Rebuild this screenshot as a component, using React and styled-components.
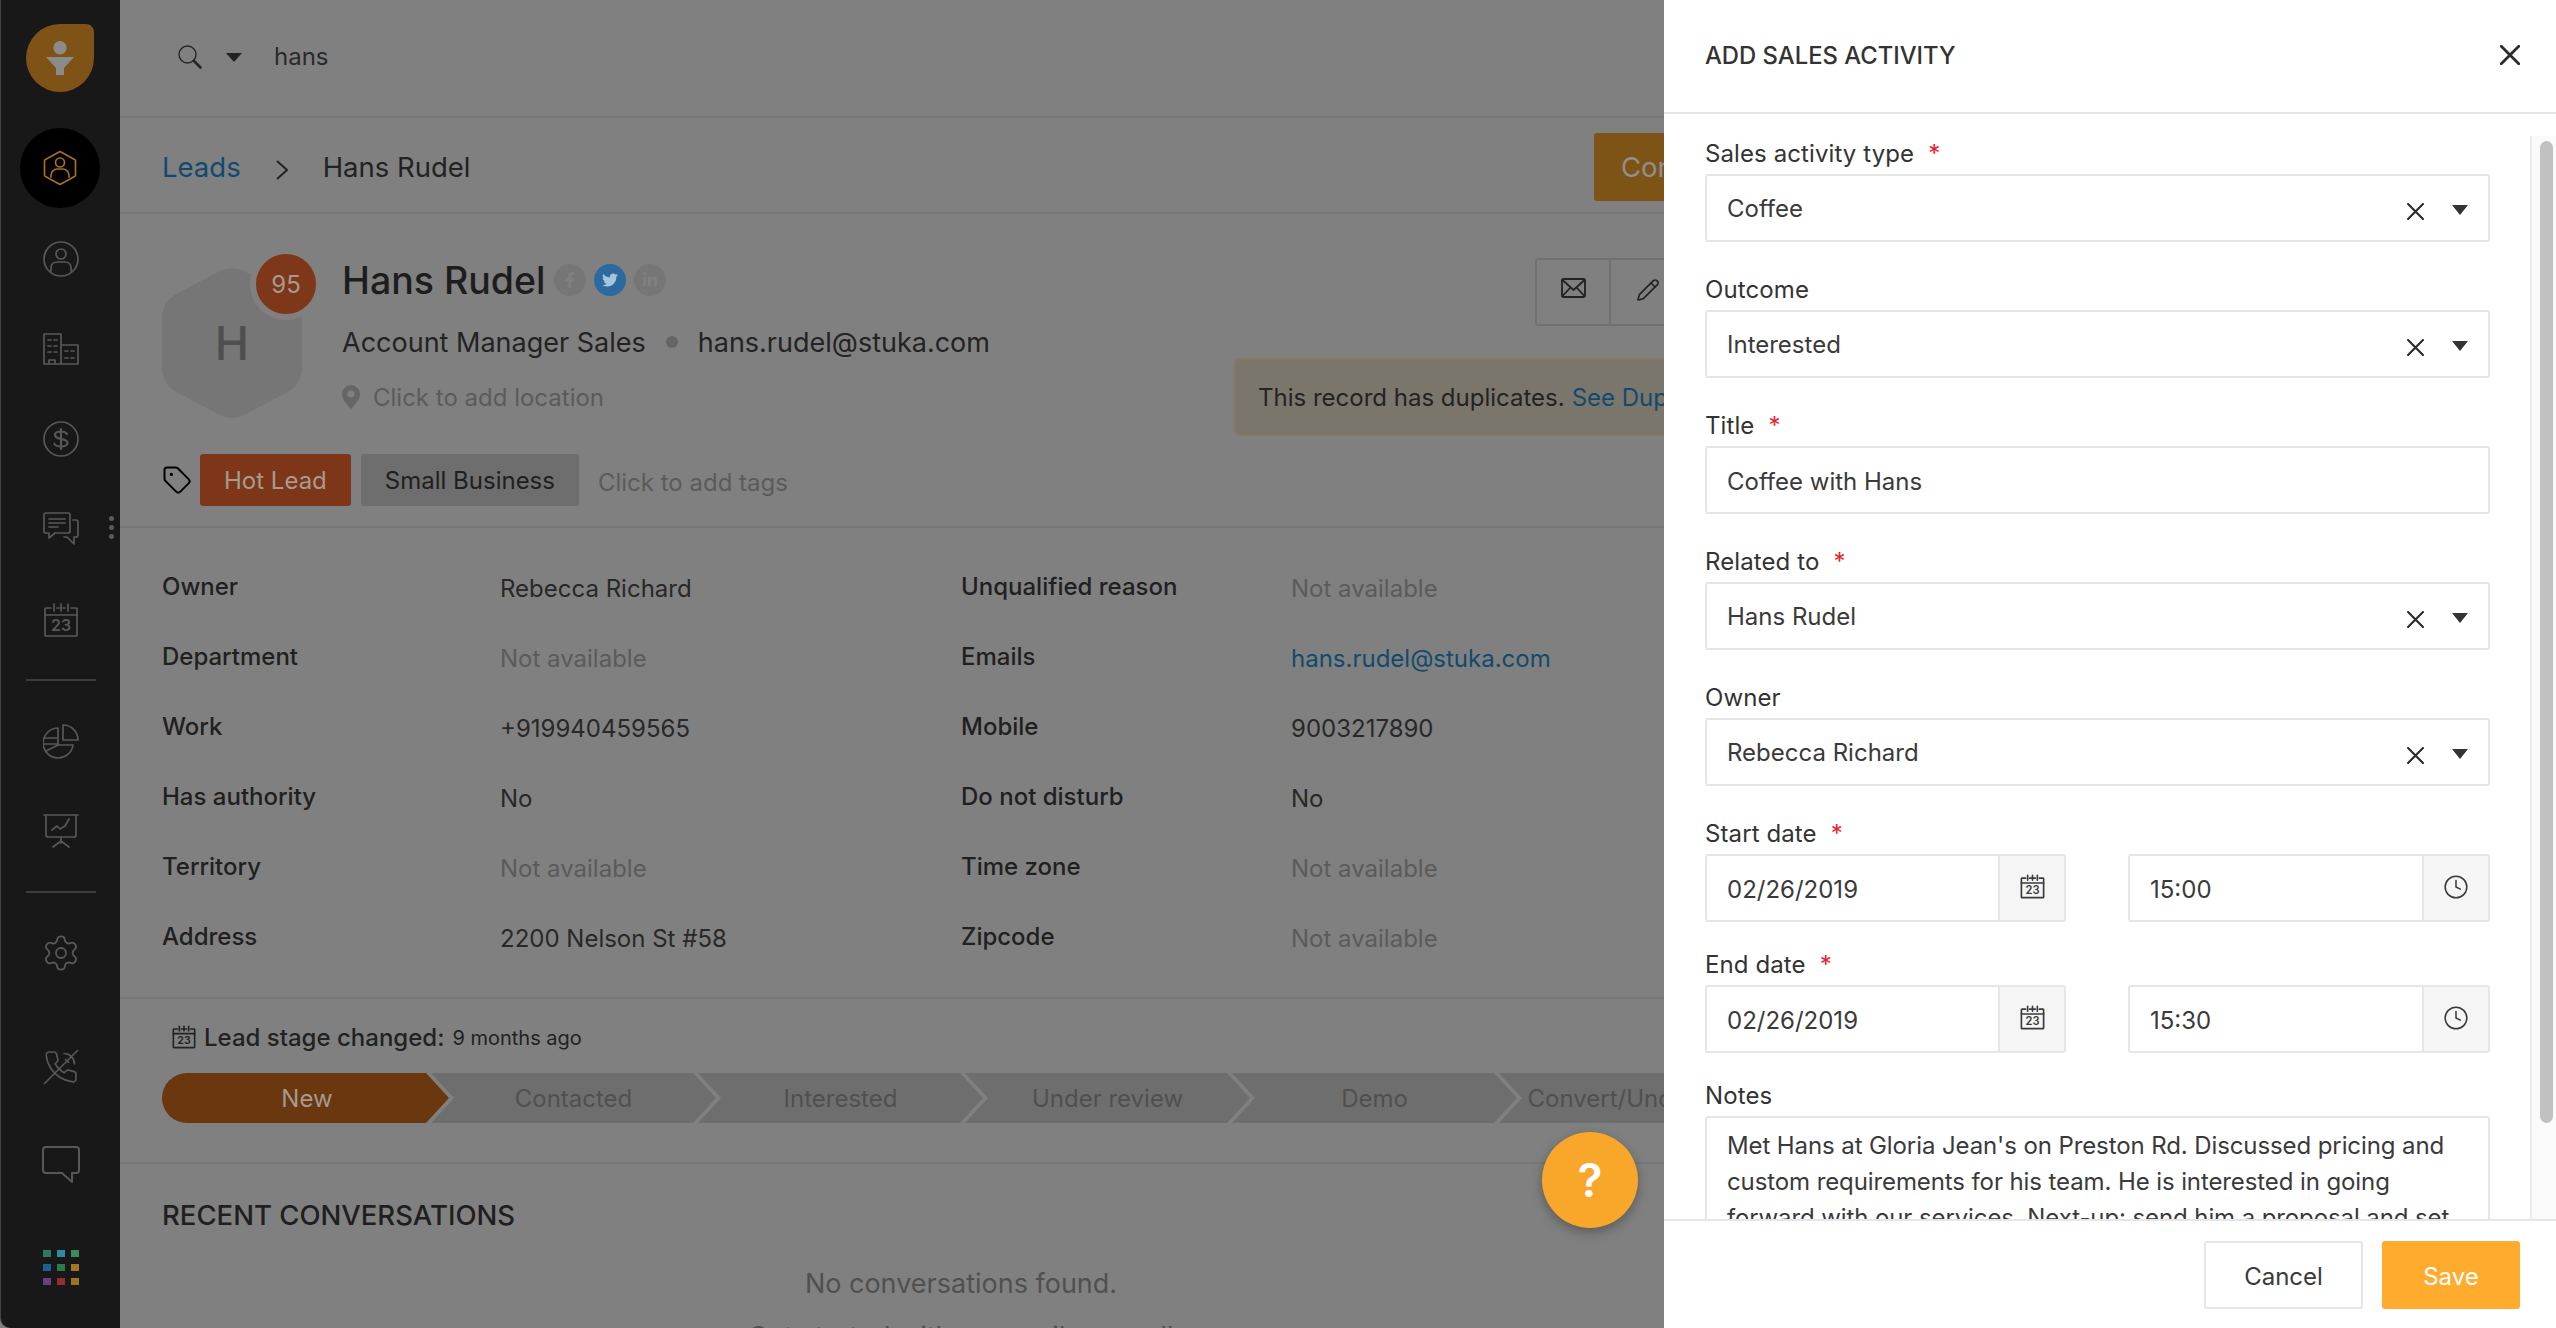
import React from "react";
import styled, { createGlobalStyle } from "styled-components";
import { Settings, Tag, Clock, Pencil } from "lucide-react";
import { FaFacebookF, FaTwitter, FaLinkedinIn } from "react-icons/fa";

const GlobalStyle = createGlobalStyle`
  html, body { margin: 0; padding: 0; height: 100%; background: #808080; }
  body { font-family: Inter, "Noto Sans", sans-serif; overflow: hidden; }
  * { box-sizing: border-box; }
`;

const Shell = styled.div`
  position: relative;
  display: flex;
  width: 2556px;
  height: 1328px;
  overflow: hidden;
  background: #808080;
`;

/* left nav */
const Nav = styled.nav`
  position: relative;
  flex: 0 0 120px;
  display: flex;
  flex-direction: column;
  align-items: center;
  padding-top: 24px;
  background: #181818;
  border-left: 1px solid #444;
  border-bottom-left-radius: 10px;
`;

const Logo = styled.div`
  width: 68px;
  height: 68px;
  margin-right: 1px;
  display: flex;
  align-items: center;
  justify-content: center;
  background: #7f5316;
  border-radius: 50% 8px 50% 50%;
`;

const ActiveItem = styled.div`
  width: 80px;
  height: 80px;
  margin-top: 36px;
  margin-right: 2px;
  border-radius: 50%;
  background: #000;
  display: flex;
  align-items: center;
  justify-content: center;
`;

const NavItem = styled.div`
  height: 36px;
  margin-top: ${({ $top }) => $top}px;
  display: flex;
  align-items: center;
  justify-content: center;
  color: #585858;
`;

const NavRule = styled.div`
  width: 70px;
  height: 2px;
  margin-top: ${({ $top }) => $top}px;
  background: #3d3d3d;
`;

const GridDots = styled.div`
  display: grid;
  grid-template-columns: repeat(3, 8px);
  grid-auto-rows: 7px;
  gap: 7px 6px;
  margin-top: ${({ $top }) => $top}px;
`;

const GridDot = styled.span`
  background: ${({ $color }) => $color};
`;

const MoreDots = styled.div`
  position: absolute;
  left: 108px;
  top: 516px;
  display: flex;
  flex-direction: column;
  gap: 4px;

  span {
    width: 5px;
    height: 5px;
    border-radius: 50%;
    background: #5a5a5a;
  }
`;

/* behind the panel */
const Main = styled.main`
  flex: 0 0 1544px;
  min-width: 0;
  overflow: hidden;
  color: #222;
`;

const SearchBar = styled.div`
  height: 118px;
  padding: 0 0 3px 58px;
  display: flex;
  align-items: center;
  border-bottom: 2px solid #777;
  font-size: 24px;
  color: #2a2a2a;
`;

const Caret = styled.span`
  width: 0;
  height: 0;
  margin: 2px 32px 0 24px;
  border-left: 8px solid transparent;
  border-right: 8px solid transparent;
  border-top: 9px solid #222;
`;

const Crumbs = styled.div`
  height: 96px;
  padding: 3px 0 0 42px;
  display: flex;
  align-items: center;
  border-bottom: 2px solid #777;
  font-size: 27.5px;
  white-space: nowrap;
`;

const Link = styled.a`
  color: #124a6e;
`;

const CrumbArrow = styled.svg`
  margin: 6px 35px 0 35px;
`;

const Convert = styled.div`
  margin-left: auto;
  width: 240px;
  height: 68px;
  margin-right: -170px;
  padding-left: 27px;
  display: flex;
  align-items: center;
  background: #7e5316;
  border-radius: 3px;
  color: #8f8f8f;
`;

const Profile = styled.section`
  height: 314px;
  padding: 39px 0 0 42px;
  border-bottom: 2px solid #777;
`;

const ProfileTop = styled.div`
  display: flex;
  height: 184px;
`;

const AvatarWrap = styled.div`
  position: relative;
  width: 140px;
  height: 152px;
  margin-top: 14px;
  margin-right: 40px;
  flex: none;
`;

const Hexagon = styled.svg`
  display: block;
`;

const AvatarLetter = styled.span`
  position: absolute;
  inset: 0;
  display: flex;
  align-items: center;
  justify-content: center;
  font-size: 46px;
  font-weight: 500;
  color: #4f4f4f;
`;

const Score = styled.span`
  position: absolute;
  left: 88px;
  top: -19px;
  width: 72px;
  height: 72px;
  display: flex;
  align-items: center;
  justify-content: center;
  border: 6px solid #808080;
  border-radius: 50%;
  background: #7e3718;
  color: #a59a93;
  font-size: 24px;
`;

const Info = styled.div`
  flex: none;
  width: 892px;
`;

const NameRow = styled.div`
  height: 52px;
  margin-top: 1px;
  display: flex;
  align-items: center;
  gap: 8px;
`;

const Name = styled.h1`
  margin: 0;
  font-size: 37.5px;
  font-weight: 500;
  color: #1d1d1d;
`;

const Social = styled.span`
  width: 32px;
  height: 32px;
  display: flex;
  align-items: center;
  justify-content: center;
  border-radius: 50%;
  font-size: 16px;
  background: ${({ $on }) => ($on ? "#2b6a9e" : "#767676")};
  color: ${({ $on }) => ($on ? "#a9c4da" : "#808080")};
`;

const RoleRow = styled.div`
  margin-top: 18px;
  height: 36px;
  display: flex;
  align-items: center;
  font-size: 27px;
  color: #232323;
`;

const RoleDot = styled.span`
  width: 12px;
  height: 12px;
  margin: 0 20px;
  border-radius: 50%;
  background: #666;
`;

const LocationRow = styled.div`
  margin-top: 21px;
  height: 32px;
  display: flex;
  align-items: center;
  gap: 13px;
  font-size: 24px;
  color: #5b5b5b;
`;

const ProfileSide = styled.div`
  flex: none;
  width: 640px;
  margin-top: 5px;
`;

const ActionGroup = styled.div`
  margin-left: 301px;
  display: flex;
  height: 68px;
  width: 230px;
  border: 2px solid #707070;
  border-radius: 3px;
`;

const ActionCell = styled.div`
  flex: 0 0 72px;
  display: flex;
  justify-content: center;
  padding-top: 18px;
  color: #222;

  & + & {
    flex-basis: 76px;
    border-left: 2px solid #707070;
  }
`;

const DupAlert = styled.div`
  margin-top: 32px;
  height: 78px;
  width: 620px;
  padding-left: 22px;
  display: flex;
  align-items: center;
  gap: 7px;
  background: #7b766b;
  border: 2px solid #84795f;
  border-radius: 6px;
  font-size: 24px;
  color: #232323;
  white-space: nowrap;
`;

const TagRow = styled.div`
  margin-top: 17px;
  height: 52px;
  display: flex;
  align-items: center;
`;

const TagIcon = styled(Tag)`
  margin-right: 8px;
  color: #000;
`;

const Chip = styled.span`
  height: 52px;
  padding: 0 ${({ $pad }) => $pad}px;
  margin-right: 10px;
  display: flex;
  align-items: center;
  border-radius: 3px;
  font-size: 24px;
  background: ${({ $hot }) => ($hot ? "#7d3718" : "#6e6e6e")};
  color: ${({ $hot }) => ($hot ? "#a79a92" : "#1f1f1f")};
`;

const AddTags = styled.span`
  margin: 4px 0 0 9px;
  font-size: 24px;
  color: #5b5b5b;
`;

const Details = styled.section`
  height: 471px;
  padding: 41px 0 0 42px;
  display: grid;
  grid-template-columns: 338px 461px 330px 300px;
  grid-auto-rows: 70px;
  border-bottom: 2px solid #777;
  font-size: 24px;
`;

const Label = styled.div`
  font-weight: 500;
  color: #202020;
  line-height: 36px;
`;

const Value = styled.div`
  line-height: 36px;
  padding-top: 2px;
  color: ${({ $muted, $link }) => ($link ? "#124a6e" : $muted ? "#5b5b5b" : "#282828")};
`;

const Stages = styled.section`
  height: 165px;
  padding: 22px 0 0 42px;
  border-bottom: 2px solid #777;
`;

const StageNote = styled.div`
  display: flex;
  align-items: center;
  height: 32px;
  margin-left: 10px;
  gap: 8px;
  font-size: 24px;
  font-weight: 500;
  color: #222;

  small {
    font-size: 20px;
    font-weight: 400;
    margin-top: 2px;
  }
`;

const StageTrack = styled.div`
  margin-top: 20px;
  display: flex;
  width: 1700px;
`;

const Stage = styled.div`
  flex: 0 0 ${({ $first }) => ($first ? 287 : 285)}px;
  height: 50px;
  margin-left: ${({ $first }) => ($first ? 0 : -18)}px;
  padding-left: ${({ $first }) => ($first ? 3 : 0)}px;
  display: flex;
  align-items: center;
  justify-content: center;
  font-size: 24px;
  white-space: nowrap;
  background: ${({ $first }) => ($first ? "#6b370e" : "#6e6e6e")};
  color: ${({ $first }) => ($first ? "#a39a92" : "#505050")};
  border-radius: ${({ $first }) => ($first ? "25px 0 0 25px" : "0")};
  clip-path: ${({ $first }) =>
    $first
      ? "polygon(0 0, calc(100% - 23px) 0, 100% 50%, calc(100% - 23px) 100%, 0 100%)"
      : "polygon(0 0, calc(100% - 23px) 0, 100% 50%, calc(100% - 23px) 100%, 0 100%, 23px 50%)"};
`;

const Recent = styled.section`
  padding: 35px 0 0 42px;
`;

const RecentTitle = styled.h2`
  margin: 0;
  font-size: 27.5px;
  line-height: 32px;
  font-weight: 500;
  color: #1f1f1f;
`;

const Empty = styled.div`
  margin-top: 36px;
  width: 1598px;
  text-align: center;
  font-size: 27px;
  line-height: 34px;
  color: #505050;
`;

const EmptyHint = styled.div`
  margin-top: 19px;
`;

const HelpButton = styled.div`
  position: absolute;
  left: 1542px;
  top: 1132px;
  width: 96px;
  height: 96px;
  display: flex;
  align-items: center;
  justify-content: center;
  border-radius: 50%;
  background: #f9a72a;
  color: #fff;
  font-size: 46px;
  font-weight: 600;
  box-shadow: 0 4px 12px rgba(0, 0, 0, 0.3);
`;

/* add activity panel */
const Panel = styled.aside`
  flex: 0 0 892px;
  display: flex;
  flex-direction: column;
  background: #fff;
  color: #333;
`;

const PanelHead = styled.header`
  flex: 0 0 114px;
  padding: 0 36px 2px 41px;
  display: flex;
  align-items: center;
  justify-content: space-between;
  border-bottom: 2px solid #e6e6e6;
`;

const PanelTitle = styled.h3`
  margin: 0;
  font-size: 23.8px;
  font-weight: 500;
  color: #333;
`;

const PanelBody = styled.div`
  flex: 1;
  min-height: 0;
  display: flex;
`;

const Form = styled.div`
  flex: 1;
  min-width: 0;
  padding: 20px 40px 0 41px;
  overflow: hidden;
`;

const Field = styled.div`
  margin-bottom: ${({ $gap }) => $gap ?? 28}px;
`;

const FieldLabel = styled.div`
  height: 40px;
  font-size: 24px;
  line-height: 40px;
  letter-spacing: 0.1px;
  color: #333;

  i {
    margin-left: 14px;
    font-style: normal;
    color: #e8212e;
  }
`;

const Box = styled.div`
  height: 68px;
  padding: 0 0 0 20px;
  display: flex;
  align-items: center;
  border: 2px solid #e6e6e6;
  border-radius: 3px;
  font-size: 24px;
  color: #3a3a3a;
`;

const BoxText = styled.span`
  flex: 1;
  margin-top: ${({ $drop }) => $drop ?? 0}px;
`;

const Clear = styled.span`
  margin: 6px 28px 0 0;
`;

const DropCaret = styled.span`
  width: 0;
  height: 0;
  margin: 4px 20px 0 0;
  border-left: 8px solid transparent;
  border-right: 8px solid transparent;
  border-top: 10px solid #333;
`;

const DateGrid = styled.div`
  display: grid;
  grid-template-columns: 361px 362px;
  justify-content: space-between;
`;

const Addon = styled.span`
  flex: 0 0 66px;
  height: 100%;
  display: flex;
  align-items: flex-start;
  justify-content: center;
  padding-top: 18px;
  background: #f5f5f5;
  border-left: 2px solid #e6e6e6;
  color: #3a3a3a;
`;

const Notes = styled.div`
  height: 200px;
  padding: 10px 20px;
  border: 2px solid #e6e6e6;
  border-radius: 3px;
  font-size: 24px;
  line-height: 36px;
  letter-spacing: -0.1px;
  color: #3a3a3a;
`;

const ScrollTrack = styled.div`
  flex: 0 0 26px;
  margin-top: 22px;
  padding: 5px 3px 0 8px;
  background: #fafafa;
  border-left: 2px solid #ececec;
`;

const ScrollThumb = styled.div`
  height: 982px;
  border-radius: 8px;
  background: #c1c1c1;
`;

const PanelFoot = styled.footer`
  flex: 0 0 109px;
  padding: 20px 36px 0 0;
  display: flex;
  justify-content: flex-end;
  gap: 19px;
  border-top: 2px solid #e6e6e6;
`;

const FootButton = styled.button`
  width: ${({ $save }) => ($save ? 138 : 159)}px;
  height: 68px;
  padding: 3px 0 0;
  border: 2px solid ${({ $save }) => ($save ? "#ffab2e" : "#e6e6e6")};
  border-radius: 3px;
  background: ${({ $save }) => ($save ? "#ffab2e" : "#fff")};
  color: ${({ $save }) => ($save ? "#fff" : "#3a3a3a")};
  font-family: inherit;
  font-size: 24px;
`;

const line = { fill: "none", stroke: "currentColor", strokeWidth: 1.7, strokeLinecap: "round", strokeLinejoin: "round" };

const CalendarIcon = ({ size = 36 }) => (
  <svg width={size} height={size} viewBox="0 0 36 36">
    <g {...line} strokeWidth={size < 30 ? 2.4 : 1.7}>
      <path d="M8 6H3a1 1 0 0 0-1 1v26a1 1 0 0 0 1 1h30a1 1 0 0 0 1-1V7a1 1 0 0 0-1-1h-5" />
      <path d="M14 6h2M20 6h2M11 2v7M18 2v7M25 2v7M2 13h32" />
    </g>
    <text x="18" y="29" textAnchor="middle" fontFamily="Inter, sans-serif" fontSize="16" fontWeight="600" fill="currentColor">23</text>
  </svg>
);

const UserHexIcon = () => (
  <svg width="34" height="36" viewBox="0 0 34 36" style={{ color: "#a56f1f" }}>
    <g {...line}>
      <path d="M17 1.5 31.5 9.5a1.5 1.5 0 0 1 1 1.4v14.2a1.5 1.5 0 0 1-1 1.4L17 34.5 2.500 26.500a1.500 1.500 0 0 1-1-1.400V10.900a1.500 1.500 0 0 1 1-1.400z" />
      <circle cx="17" cy="12.5" r="4.5" />
      <path d="M8 27v-2c0-3 3-6 6-6h6c3 0 6 3 6 6v2" />
    </g>
  </svg>
);

const ContactIcon = () => (
  <svg width="36" height="36" viewBox="0 0 36 36">
    <g {...line}>
      <circle cx="18" cy="18" r="17" />
      <circle cx="18" cy="13" r="5" />
      <path d="M8 30v-3c0-4 3-6 6-6h8c3 0 6 2 6 6v3" />
    </g>
  </svg>
);

const BuildingIcon = () => (
  <svg width="36" height="32" viewBox="0 0 36 32">
    <g {...line}>
      <path d="M1 31V1h17v30zM18 12h17v19H18M6 31v-4h6v4" />
      <path d="M5 7h3M11 7h3M5 13h3M11 13h3M5 19h3M11 19h3M22 18h3M28 18h3M22 25h3M28 25h3" />
    </g>
  </svg>
);

const DollarIcon = () => (
  <svg width="36" height="36" viewBox="0 0 36 36">
    <g {...line}>
      <circle cx="18" cy="18" r="17" />
      <path d="M24 13c-1-1.500-3-2.500-6-2.500-3.500 0-6 1.200-6 3.500s2.500 3.200 6 4 6.500 1.300 6.500 3.700-3 3.800-6.500 3.800c-3 0-5.500-1-6.500-2.500M18 8v20" strokeWidth="2.200" />
    </g>
  </svg>
);

const ChatsIcon = () => (
  <svg width="36" height="34" viewBox="0 0 36 34">
    <g {...line}>
      <path d="M3 1h22a2 2 0 0 1 2 2v16a2 2 0 0 1-2 2H12l-6 5v-5H3a2 2 0 0 1-2-2V3a2 2 0 0 1 2-2z" />
      <path d="M6 7h16M6 11h16M6 15h9" />
      <path d="M30 8h3a2 2 0 0 1 2 2v13a2 2 0 0 1-2 2h-2v7l-7-7h-3" />
    </g>
  </svg>
);

const PieIcon = () => (
  <svg width="36" height="36" viewBox="0 0 36 36">
    <g {...line}>
      <path d="M20 2a15 15 0 0 1 15 15H20z" />
      <path d="M15 5a15 15 0 1 0 15 17H15z" />
      <path d="M1 15h14M1 21h14M3 28l12-6" />
    </g>
  </svg>
);

const PresentationIcon = () => (
  <svg width="36" height="36" viewBox="0 0 36 36">
    <g {...line}>
      <path d="M1 2h34M3 2v20a2 2 0 0 0 2 2h26a2 2 0 0 0 2-2V2" />
      <path d="M9 17l5-4 3 3 5-3 4-7M18 24v6M10 34l8-6 8 6" />
    </g>
  </svg>
);

const CallOffIcon = () => (
  <svg width="38" height="36" viewBox="0 0 24 24">
    <g {...line} strokeWidth="1.100">
      <path d="M22 16.920v3a2 2 0 0 1-2.180 2 19.790 19.790 0 0 1-8.630-3.070 19.500 19.500 0 0 1-6-6 19.790 19.790 0 0 1-3.070-8.670A2 2 0 0 1 4.110 2h3a2 2 0 0 1 2 1.720 12.840 12.840 0 0 0 .7 2.810 2 2 0 0 1-.45 2.110L8.090 9.910a16 16 0 0 0 6 6l1.270-1.270a2 2 0 0 1 2.110-.45 12.840 12.840 0 0 0 2.810.7A2 2 0 0 1 22 16.920z" />
      <path d="M23 1 1 23M14 3a7 7 0 0 1 7 7M15 7a3 3 0 0 1 2 2" />
    </g>
  </svg>
);

const BubbleIcon = () => (
  <svg width="38" height="38" viewBox="0 0 38 38">
    <path {...line} strokeWidth="2" d="M4 1h30a3 3 0 0 1 3 3v20a3 3 0 0 1-3 3h-4v9l-10-9H4a3 3 0 0 1-3-3V4a3 3 0 0 1 3-3z" />
  </svg>
);

const SearchIcon = () => (
  <svg width="24" height="24" viewBox="0 0 24 24" style={{ color: "#252525" }}>
    <g {...line} strokeWidth="1.400">
      <circle cx="9.500" cy="9.500" r="8.500" />
      <path d="M16 16l6.500 6.500" strokeWidth="2.600" />
    </g>
  </svg>
);

const MailIcon = () => (
  <svg width="25" height="20" viewBox="0 0 25 20">
    <g {...line} strokeWidth="1.800">
      <rect x="1" y="1" width="23" height="18" rx="1.500" />
      <path d="M1.500 2 12.500 12 23.500 2M1.500 18 9 10M23.500 18 16 10" />
    </g>
  </svg>
);

const PinIcon = () => (
  <svg width="18" height="24" viewBox="0 0 18 24">
    <path fillRule="evenodd" fill="#666" d="M9 0a9 9 0 0 1 9 9c0 5-5 11-9 15C5 20 0 14 0 9a9 9 0 0 1 9-9zm0 5.500a3.500 3.500 0 1 0 0 7 3.500 3.500 0 0 0 0-7z" />
  </svg>
);

const XIcon = ({ size = 16, weight = 2 }) => (
  <svg width={size} height={size} viewBox="0 0 16 16" style={{ display: "block" }}>
    <path d="M1 1l14 14M15 1 1 15" stroke="#2b2b2b" strokeWidth={weight} strokeLinecap="round" />
  </svg>
);

const dimDots = ["#2f7a5e", "#2e8aa0", "#3a8a5a", "#1f5f8f", "#2a7a45", "#a07820", "#6a3f7f", "#8f2f2f", "#9a7520"];

const details = [
  ["Owner", "Rebecca Richard", "", "Unqualified reason", "Not available", "muted"],
  ["Department", "Not available", "muted", "Emails", "hans.rudel@stuka.com", "link"],
  ["Work", "+919940459565", "", "Mobile", "9003217890", ""],
  ["Has authority", "No", "", "Do not disturb", "No", ""],
  ["Territory", "Not available", "muted", "Time zone", "Not available", "muted"],
  ["Address", "2200 Nelson St #58", "", "Zipcode", "Not available", "muted"],
];

const stages = ["New", "Contacted", "Interested", "Under review", "Demo", "Convert/Unqualified"];

const Select = ({ value }) => (
  <Box>
    <BoxText>{value}</BoxText>
    <Clear><XIcon size={17} /></Clear>
    <DropCaret />
  </Box>
);

const DetailValue = ({ kind, children }) => (
  <Value $muted={kind === "muted"} $link={kind === "link"}>{children}</Value>
);

export default function App() {
  return (
    <Shell>
      <GlobalStyle />
      <Nav>
        <Logo>
          <svg width="28" height="34" viewBox="0 0 28 34">
            <circle cx="14" cy="6.700" r="6.700" fill="#8b8b8b" />
            <path d="M0 16h28L18 27v7h-8v-7z" fill="#8b8b8b" />
          </svg>
        </Logo>
        <ActiveItem><UserHexIcon /></ActiveItem>
        <NavItem $top={33}><ContactIcon /></NavItem>
        <NavItem $top={54}><BuildingIcon /></NavItem>
        <NavItem $top={54}><DollarIcon /></NavItem>
        <NavItem $top={54}><ChatsIcon /></NavItem>
        <NavItem $top={55}><CalendarIcon /></NavItem>
        <NavRule $top={41} />
        <NavItem $top={42}><PieIcon /></NavItem>
        <NavItem $top={54}><PresentationIcon /></NavItem>
        <NavRule $top={42} />
        <NavItem $top={42}><Settings size={40} strokeWidth={1.1} /></NavItem>
        <NavItem $top={78}><CallOffIcon /></NavItem>
        <NavItem $top={62}><BubbleIcon /></NavItem>
        <GridDots $top={67}>
          {dimDots.map((c) => <GridDot key={c} $color={c} />)}
        </GridDots>
        <MoreDots><span /><span /><span /></MoreDots>
      </Nav>

      <Main>
        <SearchBar>
          <SearchIcon />
          <Caret />
          hans
        </SearchBar>
        <Crumbs>
          <Link>Leads</Link>
          <CrumbArrow width="12" height="20" viewBox="0 0 12 20">
            <path d="M1 1l10 9-10 9" fill="none" stroke="#222" strokeWidth="2" />
          </CrumbArrow>
          Hans Rudel
          <Convert>Convert</Convert>
        </Crumbs>

        <Profile>
          <ProfileTop>
            <AvatarWrap>
              <Hexagon width="140" height="152" viewBox="0 0 140 152">
                <path fill="#767676" d="M58 4q12-6 24 0l42 22q16 8 16 26v48q0 18-16 26l-42 22q-12 6-24 0l-42-22Q0 118 0 100V52q0-18 16-26z" />
              </Hexagon>
              <AvatarLetter>H</AvatarLetter>
              <Score>95</Score>
            </AvatarWrap>
            <Info>
              <NameRow>
                <Name>Hans Rudel</Name>
                <Social><FaFacebookF /></Social>
                <Social $on><FaTwitter /></Social>
                <Social><FaLinkedinIn /></Social>
              </NameRow>
              <RoleRow>
                Account Manager Sales
                <RoleDot />
                hans.rudel@stuka.com
              </RoleRow>
              <LocationRow><PinIcon />Click to add location</LocationRow>
            </Info>
            <ProfileSide>
              <ActionGroup>
                <ActionCell><MailIcon /></ActionCell>
                <ActionCell><Pencil size={24} strokeWidth={1.6} /></ActionCell>
              </ActionGroup>
              <DupAlert>This record has duplicates. <Link>See Duplicates</Link></DupAlert>
            </ProfileSide>
          </ProfileTop>
          <TagRow>
            <TagIcon size={30} strokeWidth={1.6} />
            <Chip $hot $pad={24}>Hot Lead</Chip>
            <Chip $pad={24}>Small Business</Chip>
            <AddTags>Click to add tags</AddTags>
          </TagRow>
        </Profile>

        <Details>
          {details.map(([a, b, bk, c, d, dk]) => (
            <React.Fragment key={a}>
              <Label>{a}</Label>
              <DetailValue kind={bk}>{b}</DetailValue>
              <Label>{c}</Label>
              <DetailValue kind={dk}>{d}</DetailValue>
            </React.Fragment>
          ))}
        </Details>

        <Stages>
          <StageNote>
            <CalendarIcon size={24} />
            Lead stage changed: <small>9 months ago</small>
          </StageNote>
          <StageTrack>
            {stages.map((s, i) => <Stage key={s} $first={i === 0}>{s}</Stage>)}
          </StageTrack>
        </Stages>

        <Recent>
          <RecentTitle>RECENT CONVERSATIONS</RecentTitle>
          <Empty>
            No conversations found.
            <EmptyHint>Get started with an email or a call</EmptyHint>
          </Empty>
        </Recent>
      </Main>

      <HelpButton>?</HelpButton>

      <Panel>
        <PanelHead>
          <PanelTitle>ADD SALES ACTIVITY</PanelTitle>
          <XIcon size={20} weight={2.2} />
        </PanelHead>
        <PanelBody>
          <Form>
            <Field>
              <FieldLabel>Sales activity type<i>*</i></FieldLabel>
              <Select value="Coffee" />
            </Field>
            <Field>
              <FieldLabel>Outcome</FieldLabel>
              <Select value="Interested" />
            </Field>
            <Field>
              <FieldLabel>Title<i>*</i></FieldLabel>
              <Box><BoxText $drop={2}>Coffee with Hans</BoxText></Box>
            </Field>
            <Field>
              <FieldLabel>Related to<i>*</i></FieldLabel>
              <Select value="Hans Rudel" />
            </Field>
            <Field>
              <FieldLabel>Owner</FieldLabel>
              <Select value="Rebecca Richard" />
            </Field>
            <Field $gap={23}>
              <FieldLabel>Start date<i>*</i></FieldLabel>
              <DateGrid>
                <Box><BoxText $drop={2}>02/26/2019</BoxText><Addon><CalendarIcon size={25} /></Addon></Box>
                <Box><BoxText $drop={2}>15:00</BoxText><Addon><Clock size={26} strokeWidth={1.4} /></Addon></Box>
              </DateGrid>
            </Field>
            <Field $gap={23}>
              <FieldLabel>End date<i>*</i></FieldLabel>
              <DateGrid>
                <Box><BoxText $drop={2}>02/26/2019</BoxText><Addon><CalendarIcon size={25} /></Addon></Box>
                <Box><BoxText $drop={2}>15:30</BoxText><Addon><Clock size={26} strokeWidth={1.4} /></Addon></Box>
              </DateGrid>
            </Field>
            <Field>
              <FieldLabel>Notes</FieldLabel>
              <Notes>
                Met Hans at Gloria Jean's on Preston Rd. Discussed pricing and custom requirements for his team. He is interested in going forward with our services. Next-up: send him a proposal and set up a demo.
              </Notes>
            </Field>
          </Form>
          <ScrollTrack><ScrollThumb /></ScrollTrack>
        </PanelBody>
        <PanelFoot>
          <FootButton>Cancel</FootButton>
          <FootButton $save>Save</FootButton>
        </PanelFoot>
      </Panel>
    </Shell>
  );
}
